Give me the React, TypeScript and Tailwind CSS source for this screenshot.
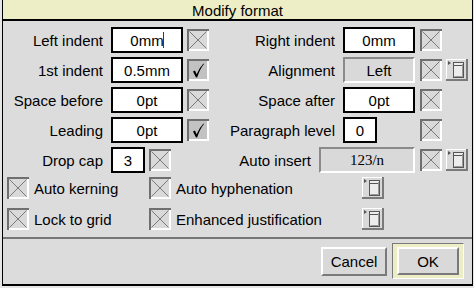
import React from "react";

const sans = "font-['Liberation_Sans',Arial,sans-serif]";

function OptBox({ ticked }: { ticked?: boolean }) {
  return (
    <svg width="22" height="22" viewBox="0 0 22 22" className="block shrink-0">
      <rect width="22" height="22" fill={ticked ? "#c2c2c2" : "#d9d9d9"} />
      <path d="M0 0H22V2H2V22H0Z" fill="#6f6f6f" />
      <path d="M22 2V22H2V20H20V2Z" fill="#ffffff" />
      {ticked ? (
        <path d="M6 12.5 L8 11.5 L9.6 15.2 Q12.5 8.5 16.5 4.5 L17 5 Q13 10 10.2 18.2 L9 18.4 Z" fill="#000" />
      ) : (
        <path d="M2.5 2.5L19.5 19.5M19.5 2.5L2.5 19.5" stroke="#7a7a7a" strokeWidth="1" fill="none" />
      )}
    </svg>
  );
}

function MenuBtn() {
  return (
    <svg width="22" height="22" viewBox="0 0 22 22" className="block shrink-0">
      <rect width="22" height="22" fill="#d9d9d9" />
      <path d="M0 0H22V1H1V22H0Z" fill="#ffffff" />
      <path d="M22 0V22H0V20H20V0Z" fill="#7a7a7a" />
      <path d="M2 2L5 4L2 6Z" fill="#555" />
      <rect x="7.5" y="3.5" width="10" height="15" fill="#ececec" stroke="#555" />
      <path d="M8 6.5H17" stroke="#555" fill="none" />
      <path d="M16.5 5V17.5H8.5" stroke="#999" strokeWidth="1" fill="none" />
    </svg>
  );
}

function Field({ w, value }: { w: string; value: string }) {
  return (
    <div className={`${w} flex h-[26px] shrink-0 items-center justify-center border-2 border-black bg-white text-[15px] leading-none`}>
      {value}
    </div>
  );
}

function GreyField({ w, value, serif }: { w: string; value: string; serif?: boolean }) {
  return (
    <div
      className={`${w} flex h-[26px] shrink-0 items-center justify-center border-2 border-t-[#8a8a8a] border-l-[#8a8a8a] border-b-white border-r-white bg-[#d9d9d9] text-[15px] leading-none ${
        serif ? "font-['Liberation_Serif','Times_New_Roman',serif]" : ""
      }`}
    >
      {value}
    </div>
  );
}

function Label({ w, text }: { w: string; text: string }) {
  return <div className={`${w} shrink-0 text-right text-[15px] leading-none`}>{text}</div>;
}

export default function App() {
  return (
    <div className={`${sans} h-[288px] w-[474px] overflow-hidden bg-[#e6e6e6] text-black`}>
      <div className="ml-[2px] h-[286px] w-[471px] border-x border-b-2 border-black bg-[#dcdcdc]">
        <div className="flex h-[19px] items-center justify-center bg-[#eeeec6] pt-[2px] text-[15px] leading-none">
          Modify format
        </div>
        <div className="h-[2px] bg-black" />

        <div className="flex flex-col gap-[4px] pt-[6px]">
          <div className="flex items-center">
            <Label w="w-[100px]" text="Left indent" />
            <div className="ml-[8px]">
              <div className="relative">
                <Field w="w-[72px]" value="0mm" />
                <div className="absolute left-[52px] top-[5px] h-[16px] w-[1px] bg-[#c00000]" />
              </div>
            </div>
            <div className="ml-[4px]">
              <OptBox />
            </div>
            <Label w="w-[126px]" text="Right indent" />
            <div className="ml-[8px]">
              <Field w="w-[72px]" value="0mm" />
            </div>
            <div className="ml-[5px]">
              <OptBox />
            </div>
          </div>

          <div className="flex items-center">
            <Label w="w-[100px]" text="1st indent" />
            <div className="ml-[8px]">
              <Field w="w-[72px]" value="0.5mm" />
            </div>
            <div className="ml-[4px]">
              <OptBox ticked />
            </div>
            <Label w="w-[126px]" text="Alignment" />
            <div className="ml-[8px]">
              <GreyField w="w-[72px]" value="Left" />
            </div>
            <div className="ml-[5px]">
              <OptBox />
            </div>
            <div className="ml-[4px]">
              <MenuBtn />
            </div>
          </div>

          <div className="flex items-center">
            <Label w="w-[100px]" text="Space before" />
            <div className="ml-[8px]">
              <Field w="w-[72px]" value="0pt" />
            </div>
            <div className="ml-[4px]">
              <OptBox />
            </div>
            <Label w="w-[126px]" text="Space after" />
            <div className="ml-[8px]">
              <Field w="w-[72px]" value="0pt" />
            </div>
            <div className="ml-[5px]">
              <OptBox />
            </div>
          </div>

          <div className="flex items-center">
            <Label w="w-[100px]" text="Leading" />
            <div className="ml-[8px]">
              <Field w="w-[72px]" value="0pt" />
            </div>
            <div className="ml-[4px]">
              <OptBox ticked />
            </div>
            <Label w="w-[126px]" text="Paragraph level" />
            <div className="ml-[8px]">
              <Field w="w-[34px]" value="0" />
            </div>
            <div className="ml-[43px]">
              <OptBox />
            </div>
          </div>

          <div className="flex items-center">
            <Label w="w-[100px]" text="Drop cap" />
            <div className="ml-[8px]">
              <Field w="w-[34px]" value="3" />
            </div>
            <div className="ml-[4px]">
              <OptBox />
            </div>
            <Label w="w-[140px]" text="Auto insert" />
            <div className="ml-[8px]">
              <GreyField w="w-[96px]" value="123/n" serif />
            </div>
            <div className="ml-[5px]">
              <OptBox />
            </div>
            <div className="ml-[4px]">
              <MenuBtn />
            </div>
          </div>
        </div>

        <div className="mt-[4px] flex h-[22px] items-center pl-[4px]">
          <OptBox />
          <div className="ml-[5px] w-[115px] text-[15px] leading-none">Auto kerning</div>
          <OptBox />
          <div className="ml-[5px] w-[186px] text-[15px] leading-none">Auto hyphenation</div>
          <MenuBtn />
        </div>
        <div className="mt-[9px] flex h-[22px] items-center pl-[4px]">
          <OptBox />
          <div className="ml-[5px] w-[115px] text-[15px] leading-none">Lock to grid</div>
          <OptBox />
          <div className="ml-[5px] w-[186px] text-[15px] leading-none">Enhanced justification</div>
          <MenuBtn />
        </div>

        <div className="mt-[7px] h-[2px] bg-[#777777]" />

        <div className="flex h-[44px] items-center justify-end gap-[5px] pr-[8px]">
          <div className="flex h-[29px] w-[66px] items-center justify-center border-2 border-t-white border-l-white border-b-[#7a7a7a] border-r-[#7a7a7a] bg-[#d9d9d9] text-[15px] leading-none">
            Cancel
          </div>
          <div className="flex h-[36px] w-[72px] items-center justify-center border border-t-[#7a7a7a] border-l-[#7a7a7a] border-b-white border-r-white bg-[#eeeec6]">
            <div className="flex h-[28px] w-[62px] items-center justify-center border-2 border-t-white border-l-white border-b-[#7a7a7a] border-r-[#7a7a7a] bg-[#d9d9d9] text-[15px] leading-none">
              OK
            </div>
          </div>
        </div>
      </div>
    </div>
  );
}
